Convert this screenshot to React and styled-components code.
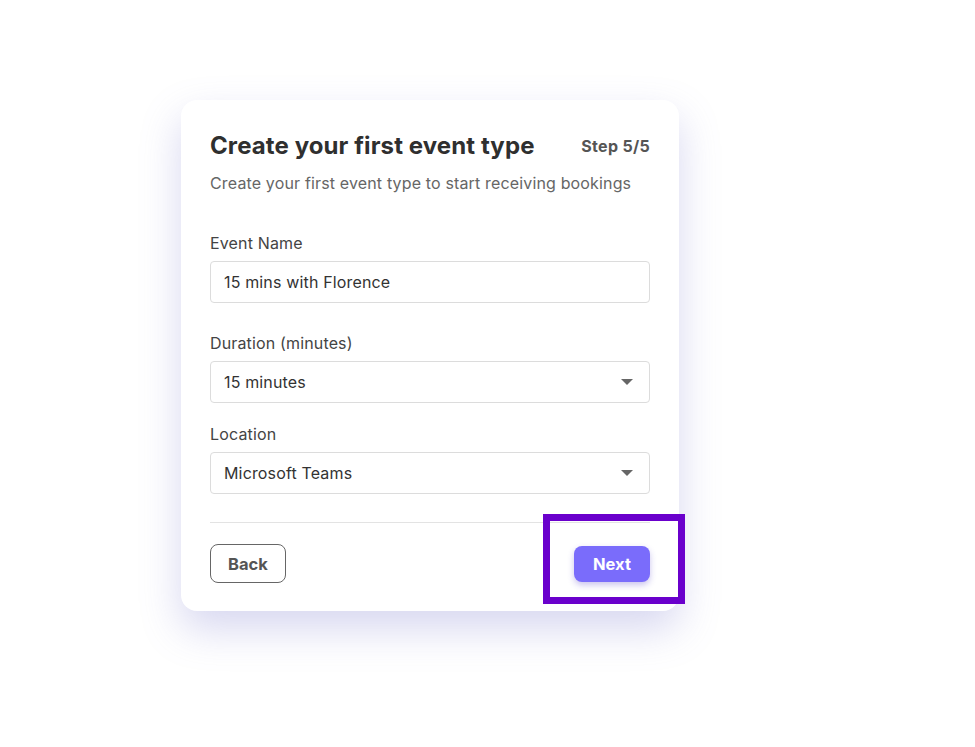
import React from "react";
import styled, { createGlobalStyle } from "styled-components";

const GlobalStyle = createGlobalStyle`
  html, body {
    margin: 0;
    padding: 0;
    background: #ffffff;
    font-family: "Inter", "Noto Sans", sans-serif;
  }
  * {
    box-sizing: border-box;
  }
`;

const Page = styled.div`
  width: 975px;
  height: 747px;
  padding: 100px 0 0 181px;
`;

const Card = styled.div`
  position: relative;
  width: 498px;
  padding: 30px 29px 28px;
  background: #ffffff;
  border-radius: 16px;
  box-shadow: 0 18px 40px rgba(110, 110, 200, 0.28);
`;

const Header = styled.div`
  display: flex;
  justify-content: space-between;
  align-items: center;
`;

const Title = styled.h1`
  margin: 0;
  font-size: 24px;
  line-height: 32px;
  font-weight: 700;
  letter-spacing: 0.1px;
  color: #2f2f2f;
`;

const Step = styled.span`
  font-size: 16px;
  font-weight: 700;
  letter-spacing: 0.3px;
  color: #555555;
`;

const Subtitle = styled.p`
  margin: 9px 0 37px;
  font-size: 16px;
  line-height: 24px;
  letter-spacing: 0.15px;
  color: #666666;
`;

const Field = styled.div`
  display: flex;
  flex-direction: column;
  margin-bottom: ${(p) => p.$gap}px;
`;

const Label = styled.label`
  font-size: 16px;
  line-height: 22px;
  letter-spacing: 0.15px;
  color: #444444;
  margin-bottom: 7px;
`;

const Input = styled.div`
  height: 42px;
  padding: 0 14px 0 13px;
  display: flex;
  align-items: center;
  justify-content: space-between;
  border: 1px solid #dcdcdc;
  border-radius: 4px;
  font-size: 16px;
  letter-spacing: 0.15px;
  color: #333333;
`;

const Caret = styled.span`
  width: 0;
  height: 0;
  margin-right: 2px;
  border-left: 6px solid transparent;
  border-right: 6px solid transparent;
  border-top: 6px solid #666666;
`;

const Divider = styled.hr`
  margin: 0 0 21px;
  border: 0;
  border-top: 1px solid #e3e3e3;
`;

const Footer = styled.div`
  display: flex;
  justify-content: space-between;
  align-items: center;
`;

const BackButton = styled.button`
  width: 76px;
  height: 39px;
  background: #ffffff;
  border: 1px solid #666666;
  border-radius: 8px;
  font-family: inherit;
  font-size: 16.5px;
  font-weight: 700;
  color: #555555;
`;

const NextButton = styled.button`
  width: 76px;
  height: 36px;
  background: #7a6cfb;
  border: 0;
  border-radius: 8px;
  font-family: inherit;
  font-size: 16.5px;
  font-weight: 700;
  color: #ffffff;
  box-shadow: 0 3px 6px rgba(80, 60, 200, 0.3);
`;

const Highlight = styled.div`
  position: absolute;
  left: 362px;
  top: 414px;
  width: 142px;
  height: 90px;
  border: 7px solid #6a00cc;
  pointer-events: none;
`;

const fields = [
  { label: "Event Name", value: "15 mins with Florence", select: false, gap: 29 },
  { label: "Duration (minutes)", value: "15 minutes", select: true, gap: 20 },
  { label: "Location", value: "Microsoft Teams", select: true, gap: 28 },
];

export default function App() {
  return (
    <>
      <GlobalStyle />
      <Page>
        <Card>
          <Header>
            <Title>Create your first event type</Title>
            <Step>Step 5/5</Step>
          </Header>
          <Subtitle>Create your first event type to start receiving bookings</Subtitle>
          {fields.map((f) => (
            <Field key={f.label} $gap={f.gap}>
              <Label>{f.label}</Label>
              <Input>
                {f.value}
                {f.select && <Caret />}
              </Input>
            </Field>
          ))}
          <Divider />
          <Footer>
            <BackButton>Back</BackButton>
            <NextButton>Next</NextButton>
          </Footer>
          <Highlight />
        </Card>
      </Page>
    </>
  );
}
